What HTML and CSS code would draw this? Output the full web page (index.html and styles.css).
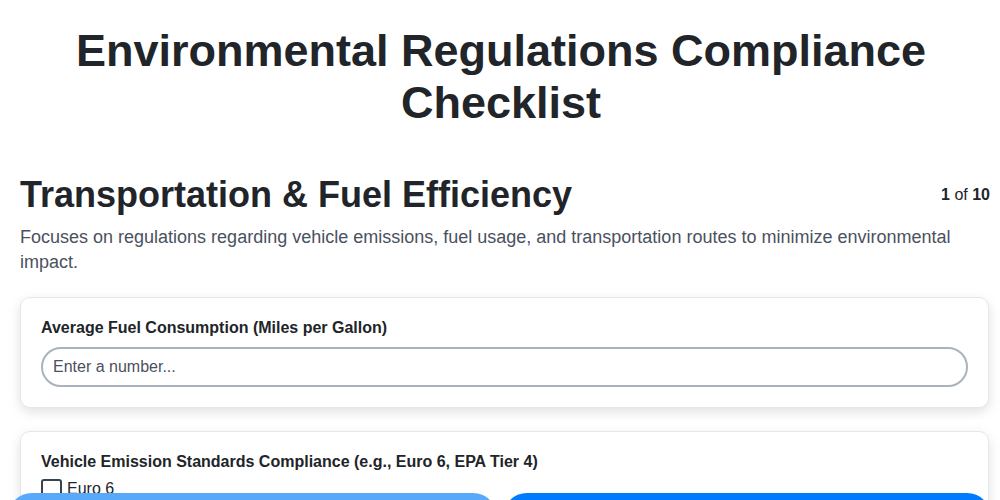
FILE: index.html
```html
<!DOCTYPE html>
<html lang="en">
<head>
<meta charset="utf-8">
<title>Environmental Regulations Compliance Checklist</title>
<link rel="stylesheet" href="styles.css">
</head>
<body>
<div class="page">
  <h1 class="title">Environmental Regulations Compliance Checklist</h1>
  <div class="section-head">
    <h2 class="section-title">Transportation &amp; Fuel Efficiency</h2>
    <div class="progress"><b>1</b> of <b>10</b></div>
  </div>
  <p class="desc">Focuses on regulations regarding vehicle emissions, fuel usage, and transportation routes to minimize environmental impact.</p>

  <div class="card">
    <label class="q-label" for="fuel">Average Fuel Consumption (Miles per Gallon)</label>
    <input class="text-input" id="fuel" type="text" placeholder="Enter a number...">
  </div>

  <div class="card">
    <div class="q-label q-label-tight">Vehicle Emission Standards Compliance (e.g., Euro 6, EPA Tier 4)</div>
    <label class="check-row"><span class="box"></span><span class="check-text">Euro 6</span></label>
    <label class="check-row"><span class="box"></span><span class="check-text">EPA Tier 4</span></label>
    <label class="check-row"><span class="box"></span><span class="check-text">Other</span></label>
  </div>
</div>
<div class="nav">
  <button class="btn btn-prev">Previous</button>
  <button class="btn btn-next">Next</button>
</div>
</body>
</html>
```
FILE: styles.css
```css
* { box-sizing: border-box; }
html, body { margin: 0; padding: 0; background: #fff; }
body {
  font-family: "Liberation Sans", Arial, sans-serif;
  color: #212529;
}
.page {
  padding: 25px 11px 80px 20px;
}
.title {
  margin: 0 -2px 0 -9px;
  text-align: center;
  font-size: 45px;
  line-height: 52px;
  font-weight: 700;
  color: #212529;
}
.section-head {
  display: flex;
  justify-content: space-between;
  align-items: center;
  margin-top: 44px;
}
.section-title {
  margin: 0;
  font-size: 36px;
  line-height: 43px;
  font-weight: 700;
}
.progress {
  font-size: 16px;
  color: #212529;
  margin-right: -1px;
}
.desc {
  margin: 9px 0 22px;
  font-size: 18px;
  line-height: 25px;
  color: #4a5160;
}
.card {
  background: #fff;
  border: 1px solid #e6e7eb;
  border-radius: 10px;
  box-shadow: 0 4px 12px rgba(0, 0, 0, 0.12);
  padding: 20px 20px 20px;
  margin-bottom: 23px;
}
.q-label {
  display: block;
  font-size: 16px;
  line-height: 19px;
  font-weight: 700;
  margin-bottom: 10px;
}
.q-label-tight { margin-bottom: 8px; }
.text-input {
  display: block;
  width: 100%;
  height: 40px;
  border: 2px solid #aab2bc;
  border-radius: 20px;
  padding: 0 10px;
  font-family: inherit;
  font-size: 16px;
  color: #212529;
  background: #fff;
  outline: none;
}
.text-input::placeholder { color: #4a5160; opacity: 1; }
.check-row {
  display: flex;
  align-items: flex-start;
  gap: 5px;
  font-size: 16px;
  margin-bottom: 8px;
}
.check-text {
  line-height: 18px;
  padding-top: 1px;
}
.box {
  flex: none;
  width: 21px;
  height: 21px;
  border: 2px solid #3a4250;
  border-radius: 3px;
  background: #fff;
}
.nav {
  position: fixed;
  top: 493px;
  left: 8px;
  right: 9px;
  display: flex;
  gap: 6px;
}
.btn {
  flex: 1;
  height: 48px;
  border: none;
  border-radius: 24px;
  color: #fff;
  font-family: inherit;
  font-size: 16px;
  font-weight: 700;
}
.btn-prev { background: #59a9fb; }
.btn-next { background: #007bff; }
```
